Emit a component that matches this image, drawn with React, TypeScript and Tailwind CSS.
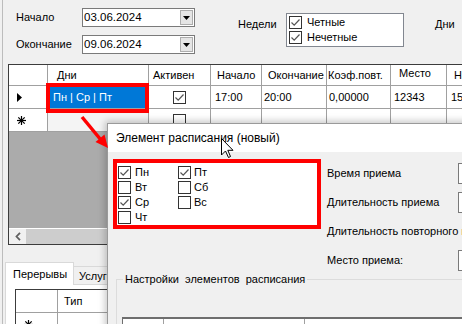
import React from "react";

function Box({ checked }: { checked?: boolean }) {
  return (
    <div className="w-[13px] h-[13px] shrink-0 border border-[#333333] bg-white flex items-center justify-center">
      {checked ? (
        <svg width="11" height="11" viewBox="0 0 11 11">
          <polyline points="1.5,5.5 4.2,8.2 9.5,2.5" fill="none" stroke="#555555" strokeWidth="1.2" />
        </svg>
      ) : null}
    </div>
  );
}

function DateBox({ value }: { value: string }) {
  return (
    <div className="w-[113px] h-[19px] border border-[#7a7a7a] bg-white flex items-center justify-between pl-[1px] pr-[1px]">
      <span className="text-[11.5px]">{value}</span>
      <div className="w-[13px] h-[15px] bg-[#e5e5e5] border border-[#adadad] flex items-center justify-center">
        <svg width="7" height="4" viewBox="0 0 7 4">
          <polygon points="0,0 7,0 3.5,4" fill="#000" />
        </svg>
      </div>
    </div>
  );
}

function Asterisk() {
  return (
    <svg width="9" height="9" viewBox="0 0 9 9">
      <g stroke="#000" strokeWidth="1.2">
        <line x1="4.5" y1="0" x2="4.5" y2="9" />
        <line x1="0" y1="4.5" x2="9" y2="4.5" />
        <line x1="1.3" y1="1.3" x2="7.7" y2="7.7" />
        <line x1="7.7" y1="1.3" x2="1.3" y2="7.7" />
      </g>
    </svg>
  );
}

export default function App() {
  return (
    <div className="w-[462px] h-[324px] relative overflow-hidden bg-[#f0f0f0] text-[11px] leading-[13px] text-black font-['Liberation_Sans',Arial,sans-serif]">
      {/* main window */}
      <div className="ml-[2px] h-full border-l border-[#bcbcbc] flex flex-col">
        {/* top form */}
        <div className="h-[64px] flex items-start shrink-0">
          <div className="ml-[13px] mt-[8px] flex flex-col gap-[8px]">
            <div className="flex items-center h-[19px]">
              <span className="w-[66px]">Начало</span>
              <DateBox value="03.06.2024" />
            </div>
            <div className="flex items-center h-[19px]">
              <span className="w-[66px]">Окончание</span>
              <DateBox value="09.06.2024" />
            </div>
          </div>
          <span className="ml-[43px] mt-[18px] w-[48px]">Недели</span>
          <div className="mt-[13px] w-[118px] h-[34px] border border-[#828790] bg-white pt-[1px] pl-[2px]">
            <div className="h-[15px] flex items-center gap-[5px]">
              <Box checked />
              <span>Четные</span>
            </div>
            <div className="h-[15px] flex items-center gap-[5px]">
              <Box checked />
              <span>Нечетные</span>
            </div>
          </div>
          <span className="ml-[31px] mt-[18px]">Дни</span>
        </div>

        {/* data grid */}
        <div className="ml-[5px] w-[470px] h-[181px] shrink-0 border border-[#3c3c3c] flex flex-col bg-[#ababab]">
          <div className="flex h-[21px] shrink-0 bg-white border-b border-[#a0a0a0]">
            <div className="w-[39px] shrink-0 border-r border-[#a0a0a0]" />
            <div className="w-[101px] shrink-0 border-r border-[#a0a0a0] flex items-center pl-[9px]">Дни</div>
            <div className="w-[62px] shrink-0 border-r border-[#a0a0a0] flex items-center pl-[4px]">Активен</div>
            <div className="w-[51px] shrink-0 border-r border-[#a0a0a0] flex items-center pl-[6px]">Начало</div>
            <div className="w-[65px] shrink-0 border-r border-[#a0a0a0] flex items-center pl-[6px]">Окончание</div>
            <div className="w-[64px] shrink-0 border-r border-[#a0a0a0] flex items-center pl-[1px]">Коэф.повт.</div>
            <div className="w-[56px] shrink-0 border-r border-[#a0a0a0] flex items-start pt-[2px] pl-[8px]">Место</div>
            <div className="w-[60px] shrink-0 border-r border-[#a0a0a0] flex items-center pl-[7px]">Начало</div>
          </div>
          <div className="flex h-[23px] shrink-0 bg-white border-b border-[#a0a0a0]">
            <div className="w-[39px] shrink-0 border-r border-[#a0a0a0] flex items-center pl-[8px]">
              <svg width="5" height="9" viewBox="0 0 5 9">
                <polygon points="0,0 5,4.5 0,9" fill="#000" />
              </svg>
            </div>
            <div className="w-[101px] shrink-0 border-r border-[#a0a0a0] bg-[#0078d7] text-white flex items-center pl-[5px]">Пн | Ср | Пт</div>
            <div className="w-[62px] shrink-0 border-r border-[#a0a0a0] flex items-center justify-center">
              <Box checked />
            </div>
            <div className="w-[51px] shrink-0 border-r border-[#a0a0a0] flex items-center pl-[4px]">17:00</div>
            <div className="w-[65px] shrink-0 border-r border-[#a0a0a0] flex items-center pl-[2px]">20:00</div>
            <div className="w-[64px] shrink-0 border-r border-[#a0a0a0] flex items-center pl-[2px]">0,00000</div>
            <div className="w-[56px] shrink-0 border-r border-[#a0a0a0] flex items-center pl-[3px]">12343</div>
            <div className="w-[60px] shrink-0 border-r border-[#a0a0a0] flex items-center pl-[4px]">15:00</div>
          </div>
          <div className="flex h-[23px] shrink-0 bg-white border-b border-[#a0a0a0]">
            <div className="w-[39px] shrink-0 border-r border-[#a0a0a0] flex items-center pl-[8px]">
              <Asterisk />
            </div>
            <div className="w-[101px] shrink-0 border-r border-[#a0a0a0] bg-[#f4f4f4]" />
            <div className="w-[62px] shrink-0 border-r border-[#a0a0a0] flex items-center justify-center">
              <Box />
            </div>
            <div className="w-[51px] shrink-0 border-r border-[#a0a0a0]" />
            <div className="w-[65px] shrink-0 border-r border-[#a0a0a0]" />
            <div className="w-[64px] shrink-0 border-r border-[#a0a0a0]" />
            <div className="w-[56px] shrink-0 border-r border-[#a0a0a0]" />
            <div className="w-[60px] shrink-0 border-r border-[#a0a0a0]" />
          </div>
          <div className="flex-1" />
          <div className="h-[16px] shrink-0 flex bg-[#f0f0f0] border-t border-white">
            <div className="w-[17px] flex items-center justify-center">
              <svg width="6" height="9" viewBox="0 0 6 9">
                <polyline points="5,0.8 1.5,4.5 5,8.2" fill="none" stroke="#606060" strokeWidth="1.8" />
              </svg>
            </div>
            <div className="w-[220px] bg-[#cdcdcd]" />
          </div>
        </div>

        {/* tabs */}
        <div className="ml-[2px] mt-[17px] flex flex-col">
          <div className="flex items-end h-[23px]">
            <div className="relative z-[1] h-[23px] w-[69px] bg-white border border-b-0 border-[#d9d9d9] pl-[7px] flex items-center">Перерывы</div>
            <div className="h-[19px] w-[60px] bg-[#f0f0f0] border border-l-0 border-b-0 border-[#d9d9d9] pl-[5px] flex items-center">Услуги</div>
          </div>
          <div className="-mt-px w-[200px] h-[60px] bg-white border border-[#d9d9d9] pt-[4px] pl-[9px]">
            <div className="w-[150px] h-[50px] border border-[#3c3c3c] bg-[#ababab] flex flex-col">
              <div className="flex h-[23px] shrink-0 bg-white border-b border-[#a0a0a0]">
                <div className="w-[42px] shrink-0 border-r border-[#a0a0a0]" />
                <div className="w-[100px] shrink-0 flex items-center pl-[6px]">Тип</div>
              </div>
              <div className="flex h-[23px] shrink-0 bg-white">
                <div className="w-[42px] shrink-0 border-r border-[#a0a0a0] flex items-center pl-[8px]">
                  <Asterisk />
                </div>
              </div>
            </div>
          </div>
        </div>
      </div>

      {/* annotation on grid cell */}
      <div className="absolute left-[46px] top-[83px] w-[103px] h-[30px] border-4 border-[#ff0000]" />

      {/* dialog */}
      <div className="absolute left-[107px] top-[123px] w-[380px] h-[230px] bg-[#f0f0f0] border border-[#9a9a9a] shadow-[0_0_7px_2px_rgba(0,0,0,0.22)] flex flex-col">
        <div className="h-[28px] shrink-0 bg-white flex items-center pl-[8px] text-[12px]">Элемент расписания (новый)</div>
        <div className="flex mt-[7px]">
          <div className="ml-[5px] shrink-0 w-[208px] h-[70px] border-4 border-[#ff0000] bg-white pt-[2px] pl-[1px] flex">
            <div className="w-[60px] flex flex-col">
              <div className="h-[15px] flex items-center gap-[4px]"><Box checked /><span>Пн</span></div>
              <div className="h-[15px] flex items-center gap-[4px]"><Box /><span>Вт</span></div>
              <div className="h-[15px] flex items-center gap-[4px]"><Box checked /><span>Ср</span></div>
              <div className="h-[15px] flex items-center gap-[4px]"><Box /><span>Чт</span></div>
            </div>
            <div className="w-[60px] flex flex-col">
              <div className="h-[15px] flex items-center gap-[3px]"><Box checked /><span>Пт</span></div>
              <div className="h-[15px] flex items-center gap-[3px]"><Box /><span>Сб</span></div>
              <div className="h-[15px] flex items-center gap-[3px]"><Box /><span>Вс</span></div>
            </div>
          </div>
          <div className="ml-[6px] shrink-0 flex flex-col">
            <div className="h-[29px] flex items-center">
              <span className="w-[131px] shrink-0 whitespace-nowrap">Время приема</span>
              <div className="w-[60px] h-[21px] border border-[#7a7a7a] bg-white" />
            </div>
            <div className="h-[29px] flex items-center">
              <span className="w-[131px] shrink-0 whitespace-nowrap">Длительность приема</span>
              <div className="w-[60px] h-[21px] border border-[#7a7a7a] bg-white" />
            </div>
            <div className="h-[29px] flex items-center">
              <span className="whitespace-nowrap">Длительность повторного приема</span>
            </div>
            <div className="h-[29px] flex items-center">
              <span className="w-[131px] shrink-0 whitespace-nowrap">Место приема:</span>
              <div className="w-[60px] h-[21px] border border-[#7a7a7a] bg-white" />
            </div>
          </div>
        </div>
        <fieldset className="ml-[8px] -mt-[3px] w-[400px] h-[100px] border border-[#dcdcdc]">
          <legend className="ml-[6px] px-[2px] leading-[14px] whitespace-pre">Настройки  элементов  расписания</legend>
          <div className="ml-[5px] mt-[31px] h-[40px] border-l border-t-2 border-[#6e6e6e] bg-white flex">
            <div className="w-[41px] h-[8px] border-r border-[#a0a0a0]" />
            <div className="w-[141px] h-[8px] border-r border-[#a0a0a0]" />
          </div>
        </fieldset>
      </div>

      {/* red arrow + cursor overlay */}
      <svg className="absolute left-0 top-0 pointer-events-none" width="462" height="324" viewBox="0 0 462 324">
        <line x1="82" y1="117" x2="101" y2="140" stroke="#ff0000" strokeWidth="3.5" />
        <polygon points="108,148 95.5,142 104.5,134.5" fill="#ff0000" />
        <path d="M221.5 138.5 L221.5 155 L225.5 151 L228.5 157.5 L230.5 156.5 L227.8 150.3 L233 150.3 Z" fill="#ffffff" stroke="#000000" strokeWidth="1" strokeLinejoin="round" />
      </svg>
    </div>
  );
}
